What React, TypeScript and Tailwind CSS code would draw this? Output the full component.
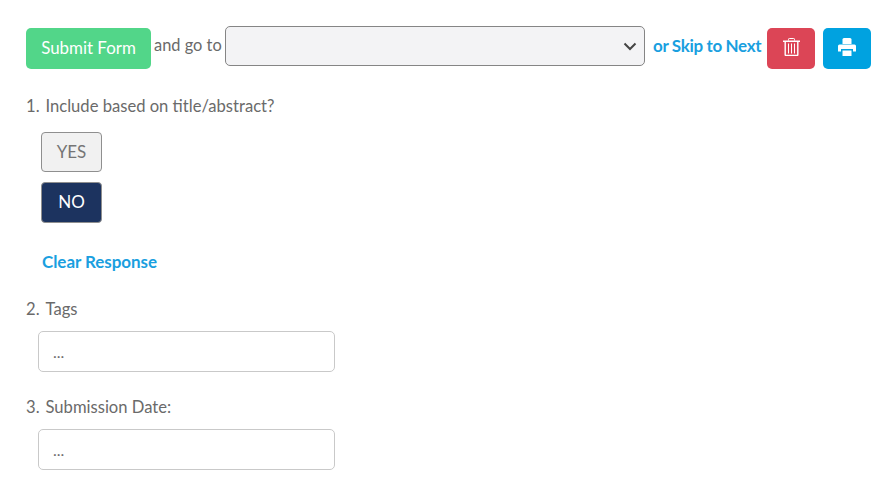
import React from "react";

const Trash = () => (
  <svg width="17" height="18" viewBox="0 0 17 18" className="block">
    <path d="M5.500 2.500V1.300A.8.8 0 0 1 6.300.5h4.400a.8.8 0 0 1 .8.8v1.200" fill="none" stroke="#fff" strokeWidth="1" />
    <path d="M0 2.500h17v1.500H0z" fill="#fff" />
    <path d="M2.200 4v12.800c0 .4.300.7.700.7h11.200c.4 0 .7-.3.700-.7V4" fill="none" stroke="#fff" strokeWidth="1.400" />
    <path d="M5.500 5.500v10M8.500 5.500v10M11.500 5.500v10" fill="none" stroke="#fff" strokeWidth="1" />
  </svg>
);

const Printer = () => (
  <svg width="18" height="18" viewBox="0 0 18 18" className="block">
    <path d="M4.500 1.500A1.500 1.500 0 0 1 6 0h6a1.500 1.500 0 0 1 1.500 1.500V6h-9z" fill="#fff" />
    <path d="M1.500 6.500h15A1.500 1.500 0 0 1 18 8v5.500h-3V11H3v2.500H0V8a1.500 1.500 0 0 1 1.500-1.500z" fill="#fff" />
    <path d="M4.500 12.500h9V18h-9z" fill="#fff" />
  </svg>
);

function Label({ n, text, className }: { n: number; text: string; className: string }) {
  return (
    <div className={`flex h-6 items-center text-[16.6px] leading-6 ${className}`}>
      <span className="w-[19.500px]">{n}.</span>
      <span>{text}</span>
    </div>
  );
}

function TextBox() {
  return (
    <div className="ml-3 flex h-[41px] w-[297px] items-center rounded-[5px] border border-[#c9c9c9] bg-white pl-[14px] text-base leading-none text-[#6f6f6f]">
      ...
    </div>
  );
}

export default function App() {
  return (
    <div className="min-h-[483px] w-[880px] overflow-hidden bg-white pl-[26px] pt-[26px] font-['Lato',sans-serif] text-[#6a6a6a]">
      <div className="flex h-[43px] items-start">
        <button className="mt-[2px] h-[41px] w-[125px] rounded-[5px] bg-[#52d689] pb-[2px] text-[16.9px] text-white">
          Submit Form
        </button>
        <span className="ml-[3px] mt-[7px] w-[68px] whitespace-nowrap text-[16.4px] leading-6">and go to</span>
        <div className="ml-[3px] flex h-10 w-[420px] items-center justify-end rounded-[5px] border border-[#858585] bg-[#f3f3f5] pr-[7px]">
          <svg width="14" height="9" viewBox="0 0 14 9" className="block">
            <path d="M1.500 1.500 7 7l5.500-5.500" fill="none" stroke="#444444" strokeWidth="2" />
          </svg>
        </div>
        <a className="ml-2 mt-[8px] w-[114px] whitespace-nowrap text-[17px] font-bold leading-6 tracking-[-0.35px] text-[#1a9fdf]">
          or Skip to Next
        </a>
        <button className="mt-[2px] flex h-[41px] w-12 items-center justify-center rounded-[5px] bg-[#dc4556] pb-[4px]">
          <Trash />
        </button>
        <button className="ml-2 mt-[2px] flex h-[41px] w-12 items-center justify-center rounded-[5px] bg-[#00a2e0] pb-[3px]">
          <Printer />
        </button>
      </div>

      <Label n={1} text="Include based on title/abstract?" className="mt-[25px]" />

      <div className="ml-[15px] mt-[14px] flex flex-col gap-[10px]">
        <button className="h-10 w-[61px] rounded-[4px] border border-[#8f8f8f] bg-[#f1f1f1] pb-px text-[17px] text-[#757575]">
          YES
        </button>
        <button className="h-[41px] w-[61px] rounded-[4px] border border-[#8f8f8f] bg-[#1c335f] pb-px text-[17px] text-white">
          NO
        </button>
      </div>

      <a className="ml-[16px] mt-[27px] block text-[17px] font-bold leading-6 tracking-[-0.05px] text-[#1a9fdf]">
        Clear Response
      </a>

      <Label n={2} text="Tags" className="mt-[23px]" />
      <div className="mt-[10px]"><TextBox /></div>

      <Label n={3} text="Submission Date:" className="mt-[23px]" />
      <div className="mt-[10px]"><TextBox /></div>
    </div>
  );
}
